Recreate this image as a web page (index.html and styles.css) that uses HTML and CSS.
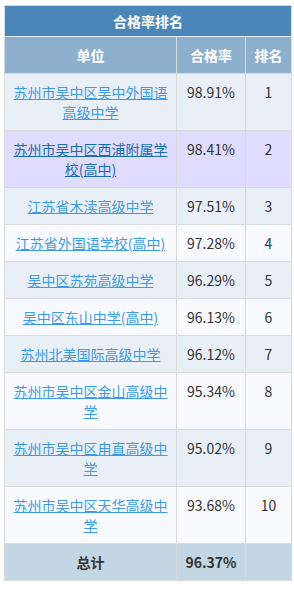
FILE: index.html
```html
<!DOCTYPE html>
<html lang="zh-CN">
<head>
<meta charset="utf-8">
<title>合格率排名</title>
<link rel="stylesheet" href="styles.css">
</head>
<body>
<table class="rank">
  <colgroup>
    <col class="c-name">
    <col class="c-rate">
    <col class="c-rank">
  </colgroup>
  <thead>
    <tr class="title"><th colspan="3">合格率排名</th></tr>
    <tr class="head"><th>单位</th><th>合格率</th><th>排名</th></tr>
  </thead>
  <tbody>
    <tr class="odd"><td class="name"><a href="#">苏州市吴中区吴中外国语高级中学</a></td><td>98.91%</td><td>1</td></tr>
    <tr class="hl"><td class="name"><a href="#">苏州市吴中区西浦附属学校(高中)</a></td><td>98.41%</td><td>2</td></tr>
    <tr class="odd"><td class="name"><a href="#">江苏省木渎高级中学</a></td><td>97.51%</td><td>3</td></tr>
    <tr class="even"><td class="name"><a href="#">江苏省外国语学校(高中)</a></td><td>97.28%</td><td>4</td></tr>
    <tr class="odd"><td class="name"><a href="#">吴中区苏苑高级中学</a></td><td>96.29%</td><td>5</td></tr>
    <tr class="even"><td class="name"><a href="#">吴中区东山中学(高中)</a></td><td>96.13%</td><td>6</td></tr>
    <tr class="odd"><td class="name"><a href="#">苏州北美国际高级中学</a></td><td>96.12%</td><td>7</td></tr>
    <tr class="even"><td class="name"><a href="#">苏州市吴中区金山高级中学</a></td><td>95.34%</td><td>8</td></tr>
    <tr class="odd"><td class="name"><a href="#">苏州市吴中区甪直高级中学</a></td><td>95.02%</td><td>9</td></tr>
    <tr class="even"><td class="name"><a href="#">苏州市吴中区天华高级中学</a></td><td>93.68%</td><td>10</td></tr>
  </tbody>
  <tfoot>
    <tr class="total"><th>总计</th><th>96.37%</th><th></th></tr>
  </tfoot>
</table>
</body>
</html>
```
FILE: styles.css
```css
html, body {
  margin: 0;
  padding: 0;
  background: #ffffff;
}
body {
  padding: 5px 4px;
  font-family: "Noto Sans CJK SC", "Noto Sans", sans-serif;
  font-size: 14px;
  color: #333333;
}
.rank {
  width: 287px;
  border-collapse: collapse;
  table-layout: fixed;
  border: 1px solid #d3d3d3;
}
.c-name { width: 172px; }
.c-rate { width: 69px; }
.c-rank { width: 46px; }
.rank th, .rank td {
  border: 1px solid #dadada;
  text-align: center;
  line-height: 20px;
  padding: 8px 4px;
  vertical-align: top;
}
.title th {
  background: #4a86b8;
  color: #ffffff;
  font-weight: bold;
  padding: 5px 4px;
  border-bottom: 1px solid #e6ecf2;
}
.head th {
  background: #8eb0cf;
  color: #ffffff;
  font-weight: bold;
}
.rank td.name {
  padding: 8px 6px;
}
.rank a {
  color: #3d9ae8;
  text-decoration: underline;
}
.odd td { background: #e9eff7; }
.even td { background: #f8faff; }
.hl td { background: #dfdcff; }
.hl a { color: #1a6cb0; }
.total th {
  background: #c3d6e4;
  color: #333333;
  font-weight: bold;
}
```
